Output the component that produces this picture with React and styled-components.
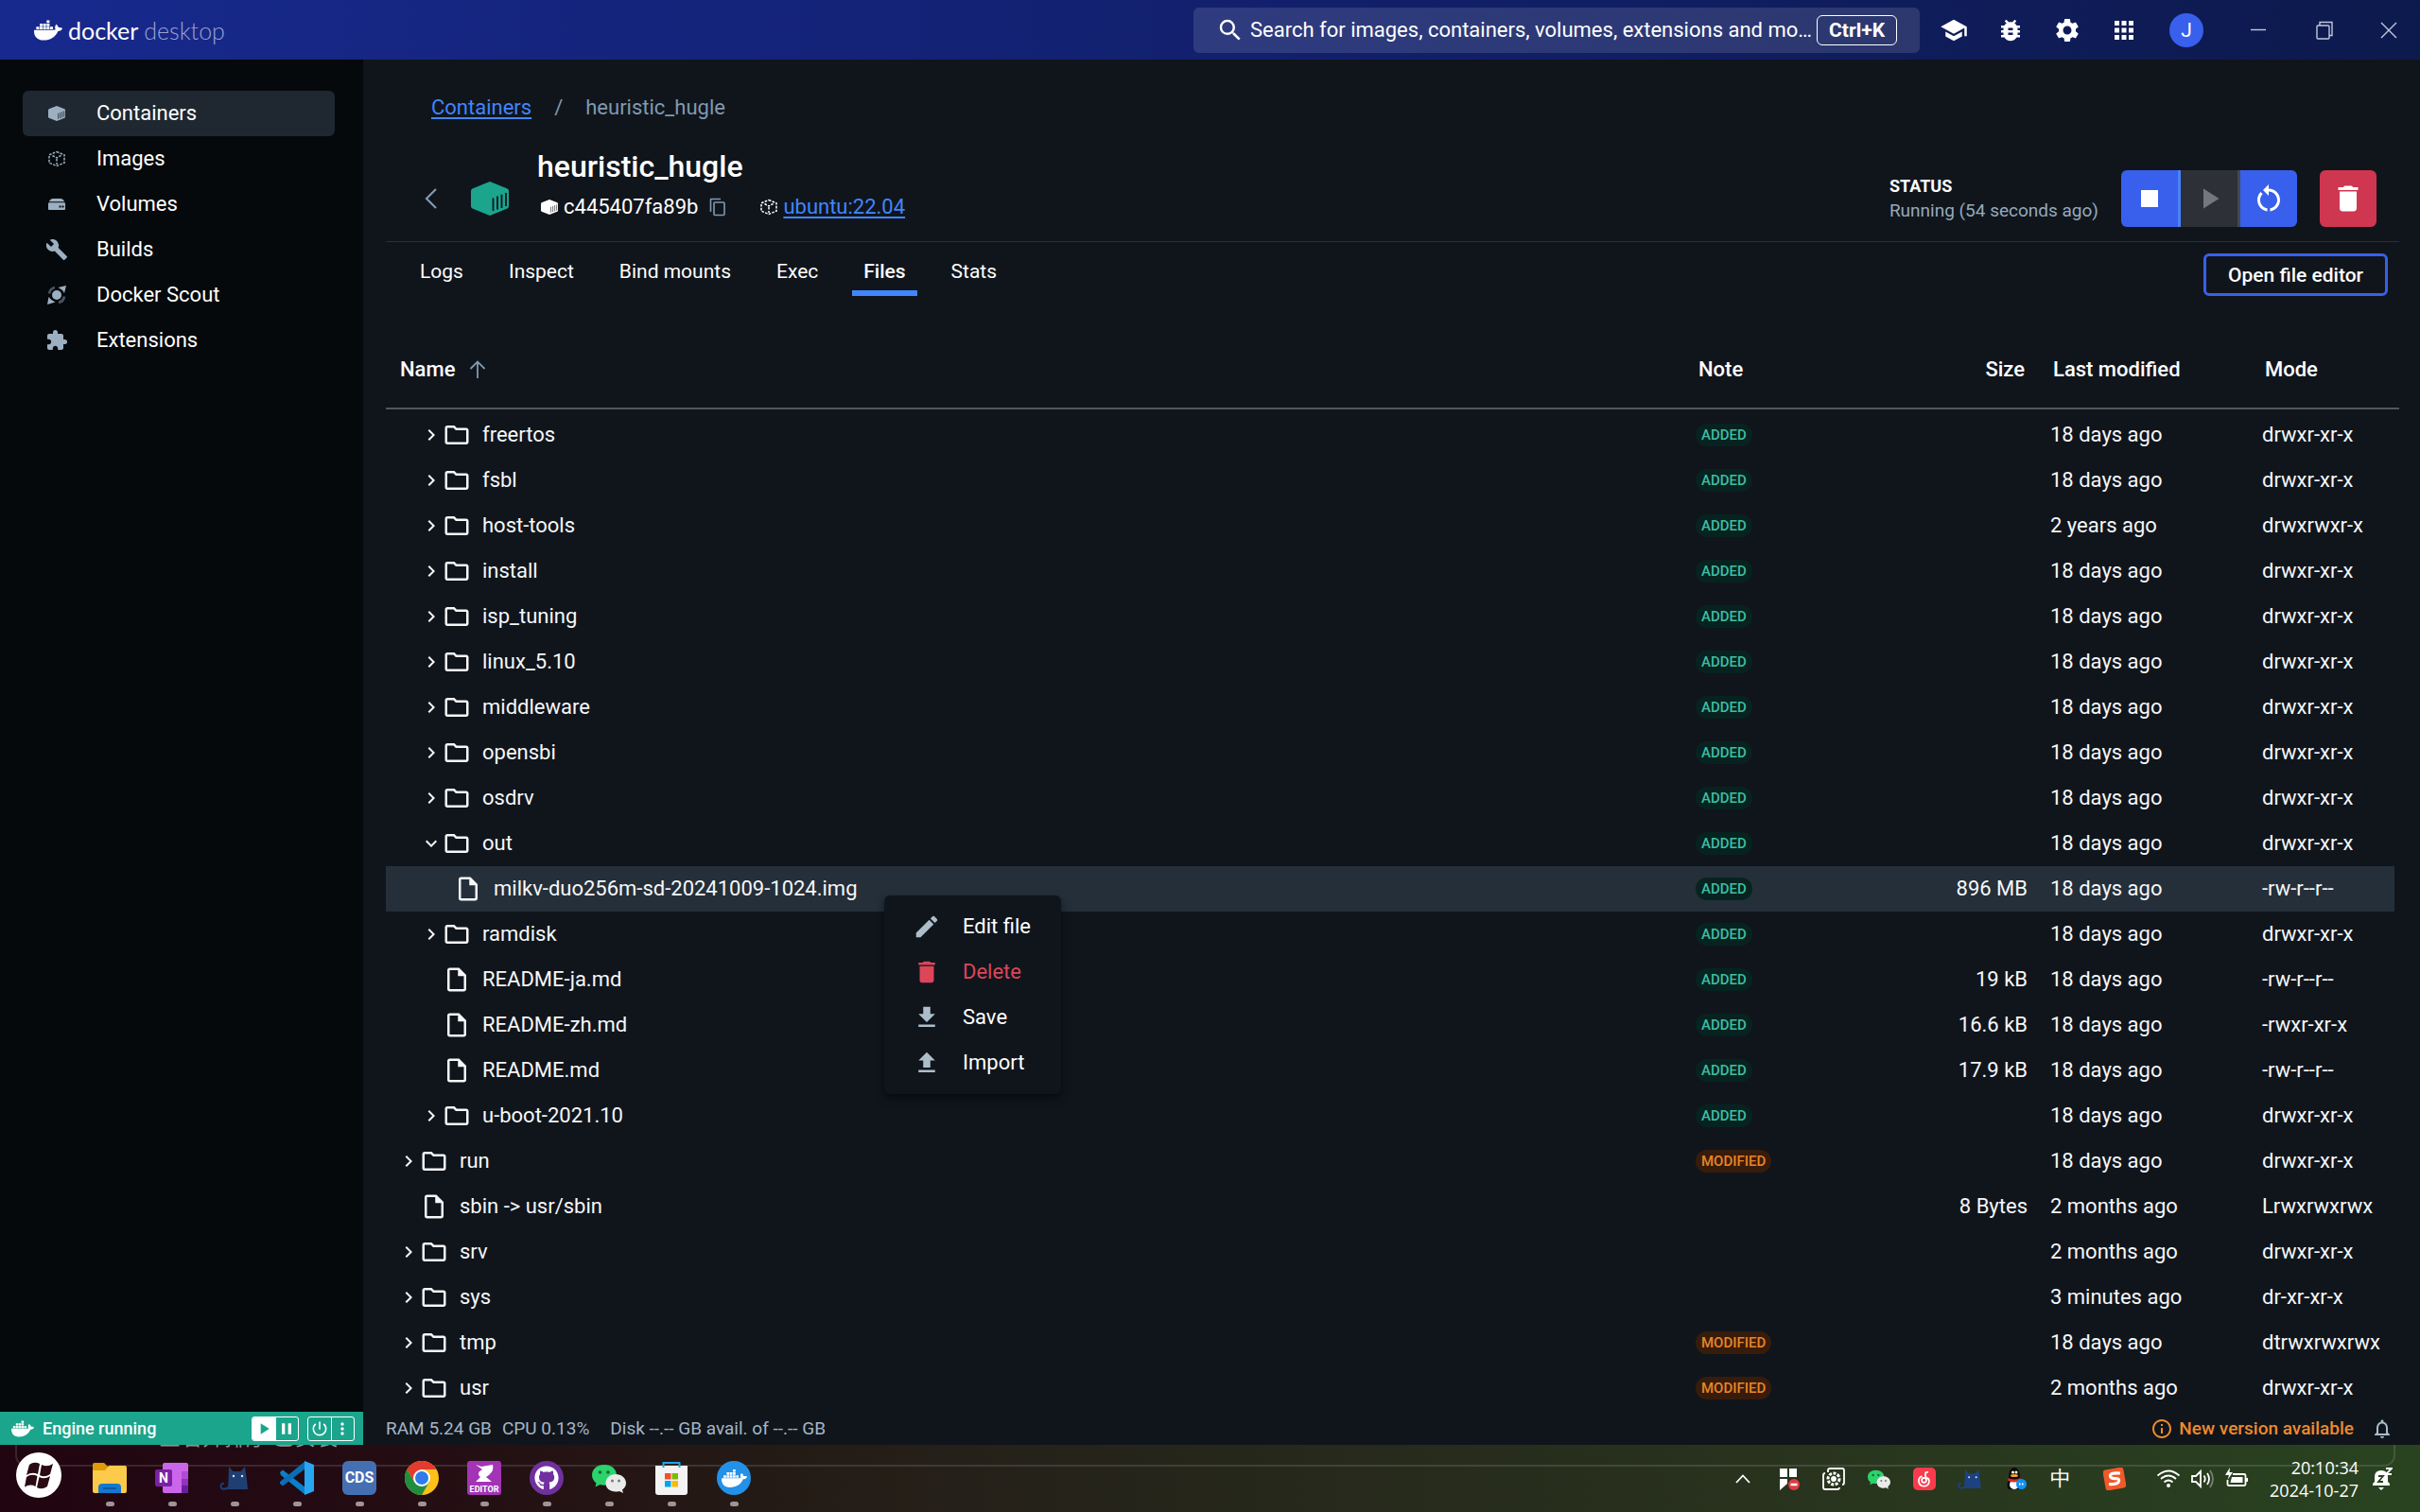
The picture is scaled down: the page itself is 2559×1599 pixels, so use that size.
import React from "react";
import styled, { createGlobalStyle, css } from "styled-components";
import {
  MdSearch, MdSchool, MdBugReport, MdSettings, MdApps, MdBuild, MdExtension,
  MdStop, MdPlayArrow, MdRestartAlt, MdDelete, MdEdit, MdDownload, MdUpload,
  MdOutlineFolder, MdOutlineInsertDriveFile, MdChevronRight, MdExpandMore,
  MdPause, MdPowerSettingsNew, MdMoreVert, MdInfoOutline, MdNotificationsNone,
} from "react-icons/md";
import { FaDocker, FaGithub } from "react-icons/fa";

const c = {
  page: "#10151c",
  side: "#05090c",
  text: "#ffffff",
  muted: "#8199b0",
  soft: "#a9bccb",
  link: "#4186ff",
  primary: "#3860ec",
  danger: "#cf364f",
  green: "#1aa58c",
  orange: "#ee8a2b",
};

const Global = createGlobalStyle`
  *, *::before, *::after { box-sizing: border-box; }
  body { margin: 0; background: ${c.page}; }
  button, input { font: inherit; color: inherit; }
  button { border: 0; padding: 0; background: none; cursor: pointer; }
  svg { display: block; flex: none; }
`;

const Screen = styled.div`
  display: flex;
  flex-direction: column;
  height: 100vh;
  overflow: hidden;
  color: ${c.text};
  font: 400 22px/30px Roboto, sans-serif;
`;

/* ---------- title bar ---------- */

const TitleBar = styled.header`
  display: flex;
  align-items: center;
  height: 63px;
  flex: none;
  padding: 0 18px 0 36px;
  background: linear-gradient(90deg, #17298d, #12206e 50%, #0d1a4d);
`;
const Brand = styled.div`
  display: flex;
  align-items: center;
  gap: 6px;
  font: 400 25px/36px Lato, sans-serif;
`;
const BrandLight = styled.span`
  font-weight: 300;
  color: #9aa2cf;
`;
const Search = styled.label`
  display: flex;
  align-items: center;
  width: 768px;
  height: 48px;
  margin-left: auto;
  padding: 0 24px;
  border-radius: 6px;
  background: rgba(255, 255, 255, 0.12);
`;
const SearchInput = styled.input`
  flex: 1;
  min-width: 0;
  margin-left: 6px;
  padding: 0;
  border: 0;
  outline: 0;
  background: none;
  &::placeholder { color: #fff; opacity: 1; }
`;
const Kbd = styled.kbd`
  padding: 0 12px;
  border: 1px solid #fff;
  border-radius: 6px;
  font: 700 21px/30px Roboto, sans-serif;
`;
const IconButton = styled.button`
  display: flex;
  align-items: center;
  justify-content: center;
  width: ${(p) => p.$w || 60}px;
  height: 36px;
  color: ${(p) => p.$color || "#fff"};
`;
const HeaderIcons = styled.div`
  display: flex;
  align-items: center;
  margin-left: 6px;
`;
const Avatar = styled.button`
  width: 36px;
  height: 36px;
  margin: 0 41px 0 18px;
  border-radius: 50%;
  background: ${c.primary};
  font-size: 21px;
`;

/* ---------- shell ---------- */

const Shell = styled.div`
  display: flex;
  flex: 1;
  min-height: 0;
`;
const Sidebar = styled.aside`
  display: flex;
  flex-direction: column;
  width: 384px;
  flex: none;
  background: ${c.side};
`;
const Nav = styled.nav`
  flex: 1;
  padding: 33px 30px 0 24px;
`;
const NavItem = styled.a`
  display: flex;
  align-items: center;
  gap: 30px;
  height: 48px;
  padding-left: 24px;
  border-radius: 6px;
  color: ${c.text};
  text-decoration: none;
  background: ${(p) => (p.$active ? "#1f2830" : "none")};
  svg { color: #9cb0c2; }
`;
const Engine = styled.div`
  display: flex;
  align-items: center;
  height: 35px;
  padding: 0 9px 0 12px;
  background: ${c.green};
  font: 500 18px/24px Roboto, sans-serif;
`;
const EngineLabel = styled.span`
  margin-left: 9px;
  margin-right: auto;
`;
const Pair = styled.div`
  display: flex;
  width: 50px;
  height: 26px;
  margin-left: 9px;
  border: 1px solid #fff;
  border-radius: 3px;
  overflow: hidden;
`;
const PairButton = styled.button`
  display: flex;
  flex: 1;
  align-items: center;
  justify-content: center;
  background: ${(p) => (p.$on ? "#fff" : "none")};
  color: ${(p) => (p.$on ? c.green : "#fff")};
  & + & { border-left: 1px solid #fff; }
`;

const Main = styled.main`
  display: flex;
  flex: 1;
  flex-direction: column;
  min-width: 0;
  padding-left: 24px;
  background: ${c.page};
`;
const Crumbs = styled.nav`
  display: flex;
  gap: 24px;
  padding: 36px 0 0 48px;
  color: ${c.muted};
`;
const Link = styled.a`
  color: ${c.link};
  text-decoration: underline;
  text-underline-offset: 3px;
`;
const Heading = styled.section`
  display: flex;
  align-items: flex-end;
  margin: 27px 22px 0 0;
  padding: 0 24px 15px 36px;
  border-bottom: 1px solid #2b3033;
`;
const Centered = styled.div`
  display: flex;
  align-items: center;
  height: 60px;
  margin-right: 30px;
`;
const Identity = styled.div`
  display: flex;
  flex-direction: column;
  gap: 8px;
  padding-bottom: 6px;
`;
const Title = styled.h1`
  margin: 0;
  font: 500 32px/40px Roboto, sans-serif;
`;
const IdLine = styled.div`
  display: flex;
  align-items: center;
  padding-left: 4px;
`;
const IdText = styled.span`
  margin: 0 12px 0 6px;
`;
const ImageLink = styled.div`
  display: flex;
  align-items: center;
  gap: 6px;
  margin-left: 36px;
`;
const Status = styled.div`
  display: flex;
  flex-direction: column;
  justify-content: center;
  height: 60px;
  margin: 0 24px 0 auto;
  font: 400 19px/26px Roboto, sans-serif;
  color: #95a9bd;
  strong { font-weight: 700; font-size: 18px; color: #fff; }
`;
const Actions = styled.div`
  display: flex;
  margin-right: 24px;
  border-radius: 6px;
  overflow: hidden;
`;
const Action = styled.button`
  display: flex;
  align-items: center;
  justify-content: center;
  width: ${(p) => (p.$edge ? 63 : 60)}px;
  height: 60px;
  border-right: ${(p) => (p.$edge ? `3px solid ${p.$edge}` : 0)};
  border-radius: ${(p) => (p.$alone ? 6 : 0)}px;
  background: ${(p) => p.$bg};
  color: ${(p) => p.$fg || "#fff"};
`;
const TabRow = styled.div`
  display: flex;
  align-items: flex-end;
  height: 57px;
  margin-right: 34px;
`;
const Tabs = styled.div`
  display: flex;
  flex: 1;
  gap: 24px;
  padding-left: 24px;
`;
const Tab = styled.button`
  height: 57px;
  padding: 11px 12px 0;
  border-bottom: 6px solid transparent;
  font-size: 21px;
  ${(p) => p.$active && css`
    font-weight: 500;
    border-color: ${c.link};
  `}
`;
const OutlineButton = styled.button`
  height: 45px;
  padding: 0 23px;
  border: 3px solid ${c.primary};
  border-radius: 6px;
  font-weight: 500;
  font-size: 21px;
`;

/* ---------- file table ---------- */

const TableArea = styled.div`
  position: relative;
  flex: 1;
  min-height: 0;
  margin: 36px 22px 0 0;
  overflow: hidden;
`;
const Table = styled.table`
  width: 100%;
  table-layout: fixed;
  border-collapse: separate;
  border-spacing: 0;
  tbody::before { content: ""; display: block; height: 3px; }
`;
const Col = styled.col`
  width: ${(p) => (p.$w ? `${p.$w}px` : "auto")};
`;
const Th = styled.th`
  height: 84px;
  padding: 2px 15px 0;
  border-bottom: 2px solid #555555;
  font-weight: 500;
  text-align: ${(p) => p.$align || "left"};
  white-space: nowrap;
`;
const SortLabel = styled.span`
  display: inline-flex;
  align-items: center;
  gap: 15px;
`;
const Td = styled.td`
  height: 48px;
  padding: 0 12px;
  text-align: ${(p) => p.$align || "left"};
  white-space: nowrap;
  color: #f6f7f8;
`;
const Row = styled.tr`
  ${(p) => p.$selected && css`
    td:not(:last-child) { background: #242f3a; }
  `}
`;
const NameCell = styled.div`
  display: flex;
  align-items: center;
  padding-left: ${(p) => p.$indent}px;
`;
const Toggle = styled.button`
  display: flex;
  justify-content: center;
  width: 24px;
`;
const FileName = styled.span`
  margin-left: 12px;
`;
const Badge = styled.span`
  display: block;
  width: fit-content;
  padding: 0 6px;
  border-radius: 12px;
  font: 500 15px/24px Roboto, sans-serif;
  color: ${(p) => (p.$changed ? "#e98527" : "#3fbda2")};
  background: ${(p) => (p.$changed ? "#381c0b" : "#07231f")};
`;
const Menu = styled.div`
  position: absolute;
  top: 598px;
  left: 527px;
  width: 187px;
  padding: 9px 0;
  border-radius: 6px;
  background: ${c.page};
  box-shadow: 0 4px 9px rgba(0, 0, 0, 0.5);
`;
const MenuItem = styled.button`
  display: flex;
  align-items: center;
  gap: 23px;
  width: 100%;
  height: 48px;
  padding-left: 30px;
  color: ${(p) => (p.$danger ? "#dc4658" : "#fff")};
  svg { color: ${(p) => (p.$danger ? "#dc4658" : "#adbecb")}; }
`;
const StatusBar = styled.footer`
  display: flex;
  align-items: center;
  height: 35px;
  flex: none;
  padding-right: 28px;
  font-size: 19px;
  color: #a4b5c6;
`;
const Metric = styled.span`
  margin-right: ${(p) => p.$gap || 11}px;
`;
const Update = styled.button`
  display: flex;
  align-items: center;
  gap: 6px;
  margin: 0 18px 0 auto;
  font-weight: 500;
  font-size: 19px;
  color: ${c.orange};
`;

/* ---------- taskbar ---------- */

const Taskbar = styled.div`
  position: relative;
  display: flex;
  align-items: flex-start;
  height: 71px;
  flex: none;
  padding: 0 29px 0 17px;
  overflow: hidden;
  background: linear-gradient(90deg, #210511, #240c13 16%, #241914 30%, #25221a 42%, #28301d 68%, #294320);
  &::before {
    content: "";
    position: absolute;
    top: -20px;
    left: 16px;
    right: 26px;
    height: 43px;
    border: 2px solid rgba(255, 255, 255, 0.12);
    border-radius: 12px;
  }
`;
const Peek = styled.span`
  position: absolute;
  top: -26px;
  left: 168px;
  font: 400 23px/32px "Noto Sans CJK SC", sans-serif;
  color: #a18b8c;
`;
const StartButton = styled.button`
  margin: 8px 18px 0 0;
  position: relative;
`;
const Task = styled.button`
  position: relative;
  display: flex;
  flex-direction: column;
  align-items: center;
  width: 66px;
  height: 66px;
  padding-top: 17px;
  &::after {
    content: "";
    width: 9px;
    height: 5px;
    margin-top: 7px;
    border-radius: 3px;
    background: #9f9598;
  }
`;
const Tray = styled.div`
  position: relative;
  display: flex;
  align-items: center;
  height: 71px;
  margin-left: auto;
`;
const TrayItem = styled.button`
  display: flex;
  align-items: center;
  justify-content: center;
  width: ${(p) => p.$w || 48}px;
  height: 48px;
`;
const Clock = styled.time`
  width: 100px;
  margin: 0 12px 0 5px;
  text-align: right;
  font: 400 18px/24px "Open Sans", sans-serif;
`;

/* ---------- drawings ---------- */

const Cube = ({ w = 18, h = w, color = "currentColor", cut = c.side }) => (
  <svg width={w} height={h} viewBox="0 0 40 36" preserveAspectRatio="none">
    <path d="M20 0 38.5 7.5Q40 8.2 40 10V26Q40 27.800 38.500 28.500L20 36 1.500 28.500Q0 27.800 0 26V10Q0 8.200 1.500 7.500Z" fill={color} />
    <path d="M23.500 17.500V31M28 15.500V29.500M32.500 13.800V28M37 12V26" stroke={cut} strokeWidth="1.800" />
  </svg>
);
const DashedCube = ({ size = 18 }) => (
  <svg width={size} height={size} viewBox="0 0 18 18" fill="none" stroke="currentColor" strokeWidth="1.500" strokeDasharray="2.600 1.300">
    <path d="M9 1.500 17 4.800V13.200L9 16.500 1 13.200V4.800Z" />
    <path d="M4.500 5.500 9 8 13.500 5.500M9 9V15" />
  </svg>
);
const Volume = () => (
  <svg width="18" height="18" viewBox="0 0 18 18" fill="currentColor">
    <path d="M4.500 3h9Q16 3.500 17.200 6.300H.8Q2 3.500 4.500 3Z" />
    <path d="M1 7.300H17Q18 7.300 18 8.300V14Q18 15 17 15H1Q0 15 0 14V8.300Q0 7.300 1 7.300Z" />
    <path d="M11.500 10.500h2v2h-2zM14.500 10.500h2v2h-2z" fill={c.side} />
  </svg>
);
const Scout = () => (
  <svg width="20" height="20" viewBox="0 0 20 20" fill="currentColor">
    <circle cx="10" cy="10" r="5" />
    <path d="M20 0 18 8Q16 4 11.500 2ZM0 20 1.500 12Q4 16 8.500 17.500Z" />
    <path d="M8 2Q3 3 2 8.500M12 18Q17.500 16.500 18 11.500" stroke="currentColor" strokeWidth="2.800" fill="none" opacity=".45" />
  </svg>
);
const Back = () => (
  <svg width="24" height="24" viewBox="0 0 24 24" fill="none" stroke={c.muted} strokeWidth="2.200"><path d="M17 2 7 12 17 22" /></svg>
);
const Copy = () => (
  <svg width="18" height="20" viewBox="0 0 18 20" fill="none" stroke={c.muted} strokeWidth="1.600"><path d="M1.500 15V2Q1.500 1.500 2 1.500H12" /><rect x="5" y="5" width="11" height="13.500" rx="1" /></svg>
);
const ArrowUp = () => (
  <svg width="18" height="20" viewBox="0 0 18 20" fill="none" stroke={c.muted} strokeWidth="1.800"><path d="M9 19V1.500M1.500 9 9 1.500 16.500 9" /></svg>
);
const WinIcon = ({ kind }) => (
  <svg width="18" height="20" viewBox="0 0 18 20" fill="none" stroke="#c3c8dc" strokeWidth="1.400">
    {kind === "min" && <path d="M1 9.500H17" />}
    {kind === "max" && <><rect x="1" y="5" width="13" height="14" rx="1" /><path d="M4 5V1.500H17V15.500H14" /></>}
    {kind === "close" && <path d="M1 2 17 18M17 2 1 18" />}
  </svg>
);
const StartLogo = () => (
  <svg width="48" height="48" viewBox="0 0 48 48">
    <circle cx="24" cy="24" r="24" fill="#fff" />
    <g fill="#2b0a14">
      <path d="M14 13Q19 9 25 12L23 23Q17 20 11 24Z" />
      <path d="M27 13Q33 16 39 12L36 23Q30 27 25 24Z" />
      <path d="M11 26Q16 22 22.500 25L20.500 36Q15 33 9 36.500Z" />
      <path d="M24.500 26Q30 29 36 25L33 36Q27 40 22 37Z" />
    </g>
  </svg>
);
const Cat = ({ size = 36, color = "#1f3f73" }) => (
  <svg width={size} height={size} viewBox="0 0 36 36">
    <path d="M12 6 16.500 11H24.500L29 6 31 20 32 30H11L11.500 19Z" fill={color} />
    <path d="M12 28Q4 32 3.500 27 4 23 7 24" fill="none" stroke={color} strokeWidth="2" />
    <circle cx="17" cy="16" r="1.200" fill="#dfe8f5" /><circle cx="26" cy="16" r="1.200" fill="#dfe8f5" />
  </svg>
);
const WeChat = ({ size = 36 }) => (
  <svg width={size} height={size} viewBox="0 0 36 36">
    <path d="M13 4C5.500 4 0 8.500 0 15 0 18.500 1.800 21.500 4.500 23.500L3.500 27.500 8.500 25Q16 27 21 23 26 19 26 15C26 8.500 20.500 4 13 4Z" fill="#2cd26b" />
    <circle cx="8.500" cy="12" r="1.800" fill="#0e6b35" /><circle cx="17" cy="12" r="1.800" fill="#0e6b35" />
    <path d="M25 14C19 14 14.500 18 14.500 23.500S19 32.500 25 32.500Q27 32.500 29 32L33 34 32 30.500Q36 27.500 36 23.500C36 18 31 14 25 14Z" fill="#e9eaea" />
    <circle cx="21.500" cy="21" r="1.500" fill="#777" /><circle cx="28.500" cy="21" r="1.500" fill="#777" />
  </svg>
);
const Tile = styled.span`
  display: flex;
  flex-direction: column;
  align-items: center;
  justify-content: center;
  width: 36px;
  height: 36px;
  border-radius: ${(p) => p.$r || 3}px;
  background: ${(p) => p.$bg};
  color: #fff;
  font: 700 16px/12px Roboto, sans-serif;
`;
const taskIcons = {
  "File Explorer": (
    <svg width="36" height="36" viewBox="0 0 36 36">
      <path d="M0 4Q0 2 2 2H12L16 6H30V12H0Z" fill="#dd9b06" />
      <path d="M0 10H13L17 5H34Q36 5 36 7V32Q36 34 34 34H2Q0 34 0 32Z" fill="#fdcb49" />
      <path d="M6 34V28Q6 24 10 24H26Q30 24 30 28V34Z" fill="#1478cf" /><path d="M11 29H25" stroke="#0b4f94" strokeWidth="1.500" />
    </svg>
  ),
  OneNote: (
    <svg width="36" height="36" viewBox="0 0 36 36">
      <rect x="8" y="2" width="27" height="32" rx="2" fill="#cb66ea" /><path d="M28 11H35V19H28Z" fill="#ae4bd5" /><path d="M28 19H35V26H28Z" fill="#9332bf" /><path d="M28 26H35V34H28Z" fill="#6b1e9b" />
      <rect x="0" y="9" width="18" height="18" rx="2" fill="#7b1fa8" />
      <text x="9" y="23" textAnchor="middle" fontFamily="Roboto, sans-serif" fontWeight="700" fontSize="14" fill="#fff">N</text>
    </svg>
  ),
  Cat: <Cat />,
  "VS Code": (
    <svg width="36" height="36" viewBox="0 0 36 36">
      <path d="M0 12 3 9.500 27 28V36L1 15Z" fill="#0a7fcb" /><path d="M0 24 3 26.500 27 8V0L0 22Z" fill="#0a6db5" /><path d="M26 0 36 4V32L26 36Z" fill="#29a6f2" />
    </svg>
  ),
  CDS: <Tile $bg="#456fb3" $r={6}>CDS</Tile>,
  Chrome: (
    <svg width="36" height="36" viewBox="0 0 36 36">
      <circle cx="18" cy="18" r="18" fill="#fbc116" />
      <path d="M2.400 9A18 18 0 0 1 33.600 9H18L10 22Z" fill="#e33b2e" /><path d="M2.400 9A18 18 0 0 0 18 36L26 22 10.200 22.500Z" fill="#1e8e3e" />
      <circle cx="18" cy="18" r="9" fill="#fff" /><circle cx="18" cy="18" r="7" fill="#2f7bea" />
    </svg>
  ),
  Editor: (
    <svg width="36" height="36" viewBox="0 0 36 36">
      <rect width="36" height="36" rx="3" fill="#a334b5" /><path d="M9 4 15 6 27 4Q29 12 20 17L26 22H9L14 17Q9 13 16 9Z" fill="#fff" />
      <text x="18" y="33" textAnchor="middle" fontFamily="Roboto, sans-serif" fontWeight="700" fontSize="9" fill="#fff">EDITOR</text>
    </svg>
  ),
  GitHub: <Tile $bg="#7130a0" $r={18}><FaGithub size={26} /></Tile>,
  WeChat: <WeChat />,
  Store: (
    <svg width="36" height="36" viewBox="0 0 36 36">
      <path d="M1 5H35V33Q35 36 32 36H4Q1 36 1 33Z" fill="#f3f3f3" />
      <path d="M11 13H17.500V19.500H11Z" fill="#f25022" /><path d="M18.500 13H25V19.500H18.500Z" fill="#7fba00" /><path d="M11 21H17.500V27.500H11Z" fill="#00a4ef" /><path d="M18.500 21H25V27.500H18.500Z" fill="#ffb900" />
      <path d="M9.500 7V2H26.500V7" fill="none" stroke="#22a5e8" strokeWidth="2" />
    </svg>
  ),
  Docker: <Tile $bg="#2391e8" $r={18}><FaDocker size={27} /></Tile>,
};
const T = ({ children, s = 24 }) => (
  <svg width={s} height={s} viewBox="0 0 24 24" fill="none" stroke="#fff" strokeWidth="1.800">{children}</svg>
);
const trayIcons = [
  ["Show hidden icons", <T><path d="M5 16 12 8.500 19 16" /></T>],
  ["Blocked", <T><path d="M3 1H11V10H3ZM13 1H21V10H13ZM3 12H11V17L3 24Z" fill="#fff" stroke="none" /><circle cx="18" cy="18" r="6" fill="#dc3c43" stroke="none" /><path d="M14.500 18H21.500" strokeWidth="2.500" /></T>],
  ["Settings", <T><path d="M6 5V3Q6 1 8 1H21Q23 1 23 3V16Q23 18 21 18M18 21Q18 23 16 23H3Q1 23 1 21V8Q1 6 3 6" /><circle cx="12" cy="12" r="6" strokeDasharray="3 1.500" strokeWidth="3" /><circle cx="12" cy="12" r="2" fill="#fff" /></T>],
  ["WeChat", <WeChat size={24} />],
  ["Music", <T><rect width="24" height="24" rx="5" fill="#fb3a4d" stroke="none" /><path d="M16 5Q12.500 4 13 8L14 14A2.500 2.500 0 1 1 11 11Q17 10 17 14.500A5.500 5.500 0 1 1 9.500 9" /></T>],
  ["Cat", <Cat size={30} color="#1d4282" />],
  ["QQ", <T><path d="M5 23Q2 19 5 13 5 0 11 0 17 0 17 12 20 17 17 23Z" fill="#0a0a0a" stroke="none" /><ellipse cx="11" cy="18" rx="5" ry="5" fill="#fff" stroke="none" /><path d="M4.500 11Q11 14 17.500 11V14Q11 17 4.500 14Z" fill="#e12b2b" stroke="none" /><ellipse cx="11" cy="8.500" rx="4" ry="1.500" fill="#f5a623" stroke="none" /><circle cx="9.500" cy="5" r="1.500" fill="#fff" stroke="none" /><circle cx="13" cy="5" r="1.500" fill="#fff" stroke="none" /><circle cx="18.500" cy="17.500" r="5.500" fill="#1390f5" stroke="none" /><path d="M16 17.500H21" strokeDasharray="1.500" /></T>],
  ["Input language", "中"],
  ["Sogou", <T><rect x="1" y="1" width="22" height="22" rx="3" fill="#f1592a" stroke="none" transform="rotate(-10 12 12)" /><path d="M18 6Q7 5 7.500 9 8 12 14 11.500 18 12 16 15.500 14 18 6 17.500" strokeWidth="3.200" /></T>, 66],
  ["Network", <T><circle cx="12" cy="19" r="2" fill="#fff" stroke="none" /><path d="M7.500 15.500Q12 11.500 16.500 15.500M4 12Q12 5 20 12M.5 8.500Q12-1.500 23.500 8.500" /></T>, 48],
  ["Sound", <T><path d="M1 9H5L10 4V20L5 15H1ZM13.500 8.500Q16 12 13.500 15.500M17 6Q21 12 17 18" /><path d="M20 3Q26 12 20 21" opacity=".35" /></T>, 24],
  ["Battery", <T><path d="M8 7H20Q21.500 7 21.500 8.500V17.500Q21.500 19 20 19H4Q2.500 19 2.500 17.500V13" /><path d="M7 10H18.500V16H5.500ZM22 11H24V15H22ZM5 0 0 8H4L2.500 13 8 5H4.500Z" fill="#fff" stroke="none" /></T>, 48],
];

/* ---------- data ---------- */

const navItems = [
  ["Containers", <Cube w={18} h={16} cut="#1f2830" />],
  ["Images", <DashedCube />],
  ["Volumes", <Volume />],
  ["Builds", <MdBuild size={24} />],
  ["Docker Scout", <Scout />],
  ["Extensions", <MdExtension size={24} />],
];
const tabs = ["Logs", "Inspect", "Bind mounts", "Exec", "Files", "Stats"];
const d = "drwxr-xr-x";
const days = "18 days ago";
const files = [
  ["freertos", 2, "dir", "ADDED", "", days, d],
  ["fsbl", 2, "dir", "ADDED", "", days, d],
  ["host-tools", 2, "dir", "ADDED", "", "2 years ago", "drwxrwxr-x"],
  ["install", 2, "dir", "ADDED", "", days, d],
  ["isp_tuning", 2, "dir", "ADDED", "", days, d],
  ["linux_5.10", 2, "dir", "ADDED", "", days, d],
  ["middleware", 2, "dir", "ADDED", "", days, d],
  ["opensbi", 2, "dir", "ADDED", "", days, d],
  ["osdrv", 2, "dir", "ADDED", "", days, d],
  ["out", 2, "open", "ADDED", "", days, d],
  ["milkv-duo256m-sd-20241009-1024.img", 3, "file", "ADDED", "896 MB", days, "-rw-r--r--"],
  ["ramdisk", 2, "dir", "ADDED", "", days, d],
  ["README-ja.md", 2, "file", "ADDED", "19 kB", days, "-rw-r--r--"],
  ["README-zh.md", 2, "file", "ADDED", "16.6 kB", days, "-rwxr-xr-x"],
  ["README.md", 2, "file", "ADDED", "17.9 kB", days, "-rw-r--r--"],
  ["u-boot-2021.10", 2, "dir", "ADDED", "", days, d],
  ["run", 1, "dir", "MODIFIED", "", days, d],
  ["sbin -> usr/sbin", 1, "file", "", "8 Bytes", "2 months ago", "Lrwxrwxrwx"],
  ["srv", 1, "dir", "", "", "2 months ago", d],
  ["sys", 1, "dir", "", "", "3 minutes ago", "dr-xr-xr-x"],
  ["tmp", 1, "dir", "MODIFIED", "", days, "dtrwxrwxrwx"],
  ["usr", 1, "dir", "MODIFIED", "", "2 months ago", d],
];
// Left padding of a row's name, by depth; plain files have no toggle in front.
const indents = { dir: { 1: 0, 2: 24 }, file: { 1: 24, 2: 48, 3: 60 } };

function FileRow({ file }) {
  const [name, depth, kind, note, size, modified, mode] = file;
  const isFile = kind === "file";
  return (
    <Row $selected={depth === 3}>
      <Td>
        <NameCell $indent={indents[isFile ? "file" : "dir"][depth]}>
          {!isFile && (
            <Toggle aria-label={`Toggle ${name}`}>
              {kind === "open" ? <MdExpandMore size={24} /> : <MdChevronRight size={24} />}
            </Toggle>
          )}
          {isFile ? <MdOutlineInsertDriveFile size={30} /> : <MdOutlineFolder size={30} />}
          <FileName>{name}</FileName>
        </NameCell>
      </Td>
      <Td>{note && <Badge $changed={note === "MODIFIED"}>{note}</Badge>}</Td>
      <Td $align="right">{size}</Td>
      <Td>{modified}</Td>
      <Td>{mode}</Td>
      <Td />
    </Row>
  );
}

export default function App() {
  return (
    <Screen>
      <Global />
      <TitleBar>
        <Brand><FaDocker size={30} /><span>docker <BrandLight>desktop</BrandLight></span></Brand>
        <Search>
          <MdSearch size={30} />
          <SearchInput aria-label="Search" placeholder="Search for images, containers, volumes, extensions and mo…" />
          <Kbd>Ctrl+K</Kbd>
        </Search>
        <HeaderIcons>
          <IconButton aria-label="Learning center"><MdSchool size={30} /></IconButton>
          <IconButton aria-label="Troubleshoot"><MdBugReport size={30} /></IconButton>
          <IconButton aria-label="Settings"><MdSettings size={30} /></IconButton>
          <IconButton aria-label="Apps"><MdApps size={30} /></IconButton>
          <Avatar>J</Avatar>
          <IconButton $w={34} aria-label="Minimize"><WinIcon kind="min" /></IconButton>
          <IconButton $w={106} aria-label="Restore"><WinIcon kind="max" /></IconButton>
          <IconButton $w={30} aria-label="Close"><WinIcon kind="close" /></IconButton>
        </HeaderIcons>
      </TitleBar>

      <Shell>
        <Sidebar>
          <Nav>
            {navItems.map(([label, icon], i) => (
              <NavItem key={label} href="#" $active={i === 0}>
                <IconButton as="span" $w={24}>{icon}</IconButton>
                {label}
              </NavItem>
            ))}
          </Nav>
          <Engine>
            <FaDocker size={24} />
            <EngineLabel>Engine running</EngineLabel>
            <Pair>
              <PairButton $on aria-label="Start"><MdPlayArrow size={20} /></PairButton>
              <PairButton aria-label="Pause"><MdPause size={20} /></PairButton>
            </Pair>
            <Pair>
              <PairButton aria-label="Power"><MdPowerSettingsNew size={20} /></PairButton>
              <PairButton aria-label="More"><MdMoreVert size={20} /></PairButton>
            </Pair>
          </Engine>
        </Sidebar>

        <Main>
          <Crumbs>
            <Link href="#">Containers</Link>
            <span>/</span>
            <span>heuristic_hugle</span>
          </Crumbs>
          <Heading>
            <Centered as="button" aria-label="Back"><Back /></Centered>
            <Centered><Cube w={40} h={36} color={c.green} cut={c.page} /></Centered>
            <Identity>
              <Title>heuristic_hugle</Title>
              <IdLine>
                <Cube w={18} h={16} cut="#555" />
                <IdText>c445407fa89b</IdText>
                <button aria-label="Copy ID"><Copy /></button>
                <ImageLink><DashedCube /><Link href="#">ubuntu:22.04</Link></ImageLink>
              </IdLine>
            </Identity>
            <Status><strong>STATUS</strong><span>Running (54 seconds ago)</span></Status>
            <Actions>
              <Action $bg={c.primary} $edge="#4a83fa" aria-label="Stop"><MdStop size={36} /></Action>
              <Action $bg="#2d3037" $fg="#74777c" $edge="#45484d" aria-label="Start"><MdPlayArrow size={36} /></Action>
              <Action $bg={c.primary} aria-label="Restart"><MdRestartAlt size={36} /></Action>
            </Actions>
            <Action $alone $bg={c.danger} aria-label="Delete container"><MdDelete size={36} /></Action>
          </Heading>
          <TabRow>
            <Tabs>{tabs.map((t) => <Tab key={t} $active={t === "Files"}>{t}</Tab>)}</Tabs>
            <OutlineButton>Open file editor</OutlineButton>
          </TabRow>

          <TableArea>
            <Table>
              <colgroup>
                <Col /><Col $w={199} /><Col $w={176} /><Col $w={224} /><Col $w={152} /><Col $w={5} />
              </colgroup>
              <thead>
                <tr>
                  <Th><SortLabel>Name <ArrowUp /></SortLabel></Th>
                  <Th>Note</Th>
                  <Th $align="right">Size</Th>
                  <Th>Last modified</Th>
                  <Th>Mode</Th>
                  <Th as="td" />
                </tr>
              </thead>
              <tbody>{files.map((f) => <FileRow key={f[0]} file={f} />)}</tbody>
            </Table>
            <Menu>
              <MenuItem><MdEdit size={30} />Edit file</MenuItem>
              <MenuItem $danger><MdDelete size={30} />Delete</MenuItem>
              <MenuItem><MdDownload size={30} />Save</MenuItem>
              <MenuItem><MdUpload size={30} />Import</MenuItem>
            </Menu>
          </TableArea>

          <StatusBar>
            <Metric>RAM 5.24 GB</Metric>
            <Metric $gap={22}>CPU 0.13%</Metric>
            <Metric>Disk --.-- GB avail. of --.-- GB</Metric>
            <Update><MdInfoOutline size={24} />New version available</Update>
            <IconButton $w={24} $color={c.soft} aria-label="Notifications"><MdNotificationsNone size={24} /></IconButton>
          </StatusBar>
        </Main>
      </Shell>

      <Taskbar>
        <Peek>查看并排序 已安装...</Peek>
        <StartButton aria-label="Start"><StartLogo /></StartButton>
        {Object.entries(taskIcons).map(([name, icon]) => (
          <Task key={name} aria-label={name}>{icon}</Task>
        ))}
        <Tray>
          {trayIcons.map(([name, icon, w], i) => (
            <TrayItem key={name + i} $w={w} aria-label={name}>{icon}</TrayItem>
          ))}
          <Clock>20:10:34<br />2024-10-27</Clock>
          <T><path d="M3 19V17L5 15V10Q5 3 12 3 19 3 19 10V15L21 17V19ZM9 21H15L12 24Z" fill="#fff" stroke="none" /><path d="M9 9H14L9 15H14" stroke="#2a4020" /><path d="M17 1H23L17 7H23" /></T>
        </Tray>
      </Taskbar>
    </Screen>
  );
}
